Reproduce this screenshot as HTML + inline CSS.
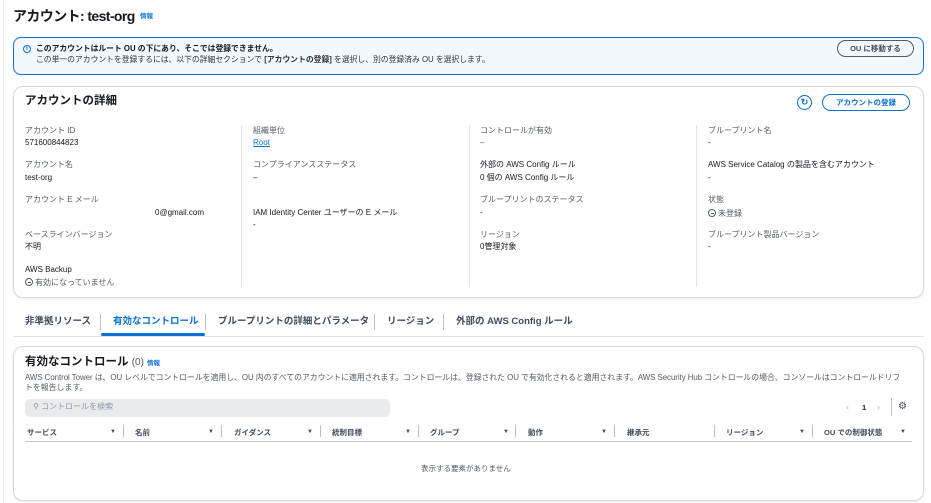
<!DOCTYPE html>
<html><head><meta charset="utf-8"><style>
*{margin:0;padding:0;box-sizing:border-box}
body{width:931px;height:503px;overflow:hidden;background:#fff;font-family:"Liberation Sans","Noto Sans CJK JP",sans-serif;color:#16191f;position:relative;font-size:8px}
.a{position:absolute;white-space:nowrap;line-height:1}
.b{font-weight:bold}
.lbl{color:#545b64}
.blue{color:#0972d3}
.card{position:absolute;border:1px solid #d5dbdb;border-radius:10px;background:#fff;box-shadow:0 1px 2px rgba(0,0,0,.08)}
.vd{position:absolute;width:1px;background:#e0e3e6}
.btn{position:absolute;border:1.5px solid #0972d3;border-radius:10px;color:#0972d3;font-weight:bold;font-size:7.5px;display:flex;align-items:center;justify-content:center}
.hd{position:absolute;top:427px;font-weight:bold;font-size:7.5px;color:#414d5c;white-space:nowrap}
.tri{position:absolute;top:429px;font-size:6px;color:#414d5c}
.sep{position:absolute;top:425px;width:1px;height:12px;background:#b6bec9}
.circ{display:inline-block;width:8px;height:8px;border:1px solid #545b64;border-radius:50%;vertical-align:-1px;position:relative;margin-right:2px}
.circ:after{content:"";position:absolute;left:1.5px;top:2.5px;width:3px;height:1px;background:#545b64}
</style></head><body>
<div style="position:absolute;left:3px;top:0;width:1px;height:503px;background:#eaeded"></div>
<div class="a b" style="left:13px;top:9px;font-size:14px;letter-spacing:-0.6px">アカウント: test-org</div>
<div class="a b blue" style="left:140px;top:14px;font-size:6.5px">情報</div>

<div style="position:absolute;left:13px;top:37px;width:911px;height:38px;background:#f2f8fd;border:1px solid #0972d3;border-radius:8px"></div>
<div class="a" style="left:23px;top:45px;width:8px;height:8px;border:1.3px solid #0972d3;border-radius:50%;color:#0972d3;font-size:6px;font-weight:bold;text-align:center;line-height:6px">i</div>
<div class="a b" style="left:36px;top:45px;font-size:7.8px">このアカウントはルート OU の下にあり、そこでは登録できません。</div>
<div class="a" style="left:36px;top:56px;font-size:7.8px;color:#333">この単一のアカウントを登録するには、以下の詳細セクションで <b>[アカウントの登録]</b> を選択し、別の登録済み OU を選択します。</div>
<div class="btn" style="left:837px;top:40px;width:77px;height:17px;border-color:#545b64;color:#414d5c">OU に移動する</div>

<div class="card" style="left:13px;top:86px;width:911px;height:212px"></div>
<div class="a b" style="left:25px;top:96px;font-size:11.5px">アカウントの詳細</div>
<div class="a" style="left:797px;top:95px;width:15px;height:15px;border:1.5px solid #0972d3;border-radius:50%;color:#0972d3;font-size:9px;font-weight:bold;text-align:center;line-height:12px">↻</div>
<div class="btn" style="left:822px;top:94px;width:88px;height:17px">アカウントの登録</div>
<div class="vd" style="left:241px;top:125px;height:162px"></div>
<div class="vd" style="left:469px;top:125px;height:162px"></div>
<div class="vd" style="left:696px;top:125px;height:162px"></div>

<div class="a lbl" style="left:25px;top:127px">アカウント ID</div><div class="a" style="left:25px;top:139px">571600844823</div>
<div class="a lbl" style="left:25px;top:161px">アカウント名</div><div class="a" style="left:25px;top:174px">test-org</div>
<div class="a lbl" style="left:25px;top:196px">アカウント E メール</div><div class="a" style="left:155px;top:209px">0@gmail.com</div>
<div class="a lbl" style="left:25px;top:231px">ベースラインバージョン</div><div class="a" style="left:25px;top:243px">不明</div>
<div class="a" style="left:25px;top:266px">AWS Backup</div><div class="a lbl" style="left:25px;top:278px"><span class="circ"></span>有効になっていません</div>

<div class="a lbl" style="left:253px;top:127px">組織単位</div><div class="a blue" style="left:253px;top:139px;text-decoration:underline">Root</div>
<div class="a lbl" style="left:253px;top:161px">コンプライアンスステータス</div><div class="a" style="left:253px;top:174px">–</div>
<div class="a" style="left:253px;top:209px">IAM Identity Center ユーザーの E メール</div><div class="a" style="left:253px;top:221px">-</div>

<div class="a lbl" style="left:480px;top:127px">コントロールが有効</div><div class="a lbl" style="left:480px;top:139px">–</div>
<div class="a" style="left:480px;top:161px">外部の AWS Config ルール</div><div class="a" style="left:480px;top:174px">0 個の AWS Config ルール</div>
<div class="a lbl" style="left:480px;top:196px">ブループリントのステータス</div><div class="a" style="left:480px;top:209px">-</div>
<div class="a lbl" style="left:480px;top:231px">リージョン</div><div class="a" style="left:480px;top:243px">0管理対象</div>

<div class="a lbl" style="left:708px;top:127px">ブループリント名</div><div class="a" style="left:708px;top:139px">-</div>
<div class="a" style="left:708px;top:161px">AWS Service Catalog の製品を含むアカウント</div><div class="a" style="left:708px;top:174px">-</div>
<div class="a lbl" style="left:708px;top:196px">状態</div><div class="a lbl" style="left:708px;top:209px"><span class="circ"></span>未登録</div>
<div class="a lbl" style="left:708px;top:231px">ブループリント製品バージョン</div><div class="a" style="left:708px;top:243px">-</div>

<div class="a b" style="left:25px;top:317px;font-size:9.5px;color:#414d5c">非準拠リソース</div>
<div class="vd" style="left:100px;top:314px;height:16px;background:#b6bec9"></div>
<div class="a b blue" style="left:113px;top:317px;font-size:9.5px">有効なコントロール</div>
<div style="position:absolute;left:101px;top:333px;width:104px;height:3px;background:#0972d3;border-radius:2px"></div>
<div class="vd" style="left:205px;top:314px;height:16px;background:#b6bec9"></div>
<div class="a b" style="left:218px;top:317px;font-size:9.5px;color:#414d5c">ブループリントの詳細とパラメータ</div>
<div class="vd" style="left:374px;top:314px;height:16px;background:#b6bec9"></div>
<div class="a b" style="left:387px;top:317px;font-size:9.5px;color:#414d5c">リージョン</div>
<div class="vd" style="left:443px;top:314px;height:16px;background:#b6bec9"></div>
<div class="a b" style="left:456px;top:317px;font-size:9.5px;color:#414d5c">外部の AWS Config ルール</div>
<div style="position:absolute;left:13px;top:336px;width:911px;height:1px;background:#e0e3e6"></div>

<div class="card" style="left:13px;top:346px;width:911px;height:155px"></div>
<div class="a b" style="left:25px;top:357px;font-size:11.5px">有効なコントロール <span style="font-weight:normal;color:#545b64;font-size:10px">(0)</span></div>
<div class="a b blue" style="left:147px;top:361px;font-size:6.5px">情報</div>
<div class="a lbl" style="left:25px;top:374px;font-size:7.9px;letter-spacing:-0.05px">AWS Control Tower は、OU レベルでコントロールを適用し、OU 内のすべてのアカウントに適用されます。コントロールは、登録された OU で有効化されると適用されます。AWS Security Hub コントロールの場合、コンソールはコントロールドリフ</div>
<div class="a lbl" style="left:25px;top:384px;font-size:7.9px">トを報告します。</div>
<div style="position:absolute;left:25px;top:399px;width:365px;height:18px;background:#e9ebed;border-radius:5px"></div>
<div class="a" style="left:33px;top:403px;font-size:8px;color:#8d99a8">⚲ コントロールを検索</div>
<div class="a" style="left:846px;top:403px;font-size:9px;color:#aab7b8">‹</div>
<div class="a b" style="left:862px;top:404px;font-size:7.5px">1</div>
<div class="a" style="left:877px;top:403px;font-size:9px;color:#aab7b8">›</div>
<div class="vd" style="left:891px;top:398px;height:18px;background:#b6bec9"></div>
<div class="a" style="left:898px;top:402px;font-size:10px;color:#414d5c">⚙</div>

<div class="hd" style="left:27px">サービス</div><div class="tri" style="left:110px">▼</div><div class="sep" style="left:123px"></div>
<div class="hd" style="left:135px">名前</div><div class="tri" style="left:208px">▼</div><div class="sep" style="left:221px"></div>
<div class="hd" style="left:234px">ガイダンス</div><div class="tri" style="left:307px">▼</div><div class="sep" style="left:320px"></div>
<div class="hd" style="left:332px">統制目標</div><div class="tri" style="left:405px">▼</div><div class="sep" style="left:418px"></div>
<div class="hd" style="left:430px">グループ</div><div class="tri" style="left:503px">▼</div><div class="sep" style="left:515px"></div>
<div class="hd" style="left:528px">動作</div><div class="tri" style="left:601px">▼</div><div class="sep" style="left:614px"></div>
<div class="hd" style="left:627px">継承元</div><div class="sep" style="left:714px"></div>
<div class="hd" style="left:726px">リージョン</div><div class="tri" style="left:799px">▼</div><div class="sep" style="left:812px"></div>
<div class="hd" style="left:824px">OU での制御状態</div><div class="tri" style="left:900px">▼</div>
<div style="position:absolute;left:25px;top:441px;width:887px;height:1px;background:#c6c6cd"></div>
<div class="a lbl" style="left:421px;top:465px;font-size:7.5px">表示する要素がありません</div>
</body></html>
